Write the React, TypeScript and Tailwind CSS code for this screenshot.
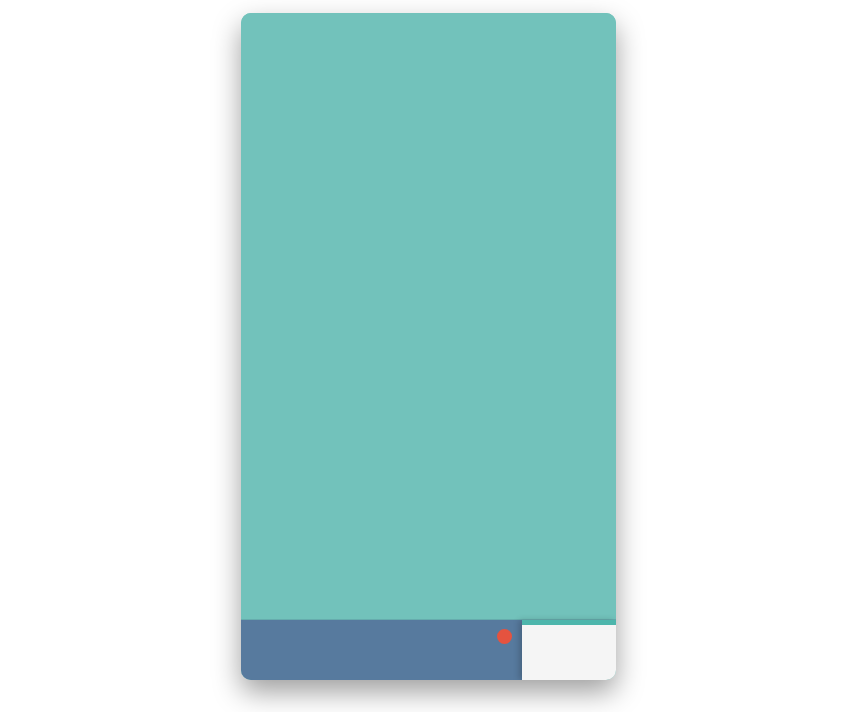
import React from 'react';

export default function App() {
  return (
    <div className="min-h-[712px] w-full bg-white pt-[13px] pl-[241px]">
      <div className="flex h-[667px] w-[375px] flex-col overflow-hidden rounded-[10px] bg-[#72c2bb] shadow-[0_12px_28px_rgba(0,0,0,0.38)]">
        <div className="flex-1 bg-[#72c2bb]" />
        <div className="flex h-[60px] shadow-[0_-1px_0_rgba(90,150,160,0.5)]">
          <div className="relative flex-1 bg-[#577a9e]">
            <span className="absolute left-[256px] top-[9px] h-[15px] w-[15px] rounded-full bg-[#e5533f]" />
          </div>
          <div className="relative z-10 w-[94px] border-t-[5px] border-[#4db6ac] bg-[#f5f5f5] shadow-[-3px_0_6px_rgba(0,0,0,0.18)]" />
        </div>
      </div>
    </div>
  );
}
